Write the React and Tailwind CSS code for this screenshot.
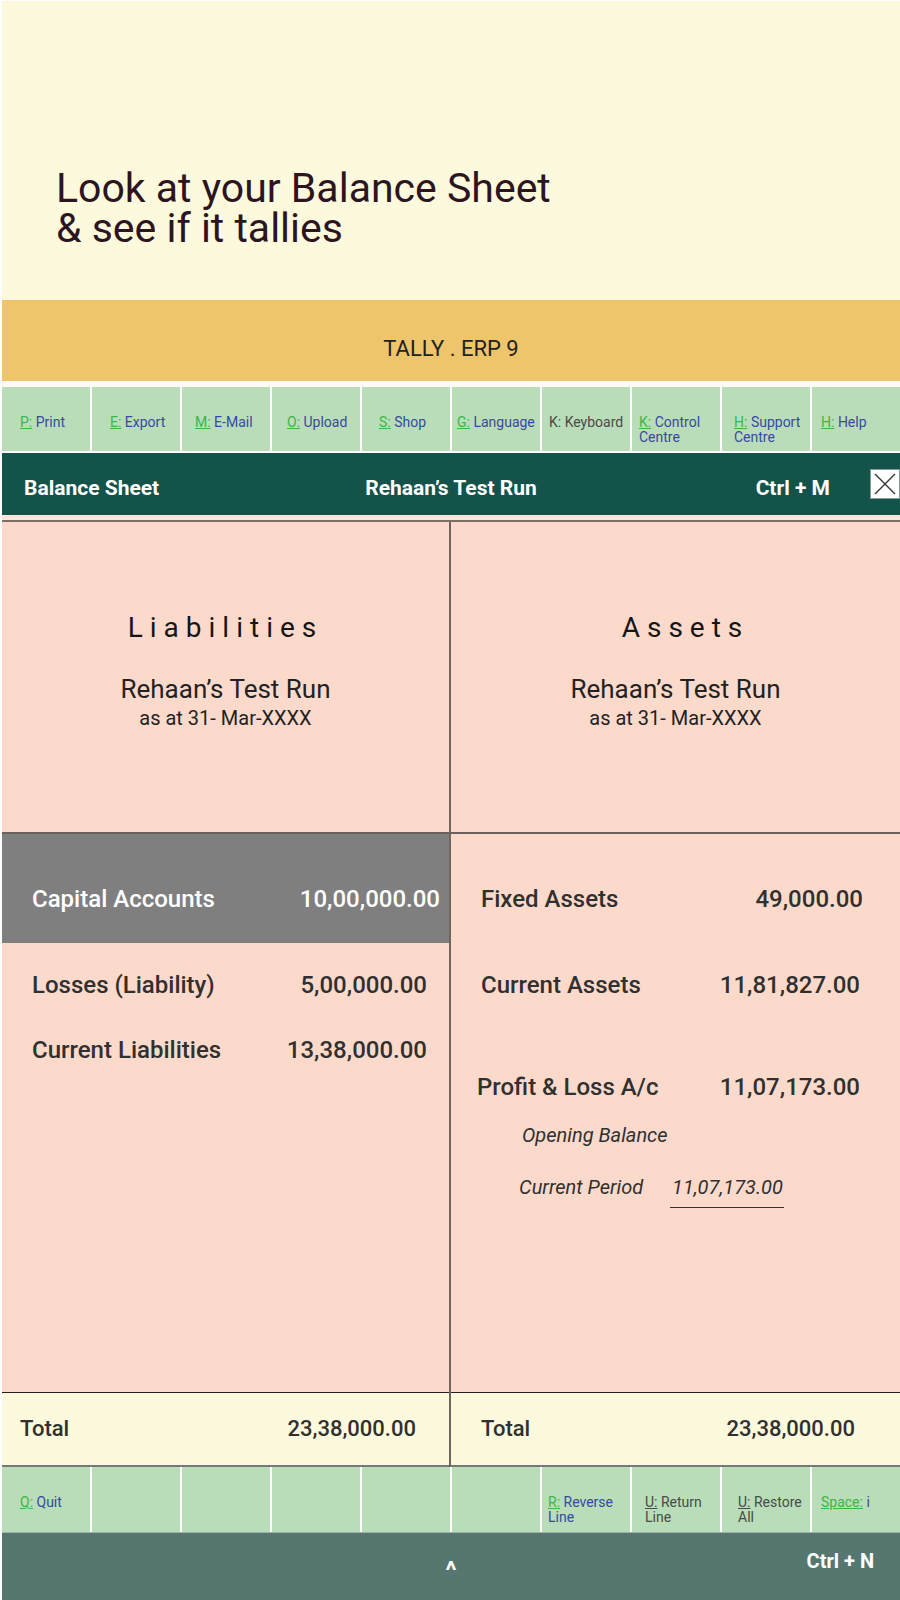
import React from "react";

const K = ({ children, gray }) => (
  <span className={gray ? "underline text-[#4a4a4a]" : "underline text-[#3cb54a]"}>{children}</span>
);

function Cell({ pl, children }) {
  return (
    <div className={`bg-[#b8ddb8] h-full pt-[28px] text-[14px] leading-[15px] ${pl}`}>
      {children}
    </div>
  );
}

const Blue = ({ children }) => <span className="text-[#3849a2]">{children}</span>;
const Gray = ({ children }) => <span className="text-[#4a4a4a]">{children}</span>;

export default function App() {
  return (
    <div className="w-[900px] h-[1600px] bg-white pt-[1px] pl-[2px] font-['Roboto','Noto_Sans',sans-serif] overflow-hidden">
      {/* Hero */}
      <div className="h-[299px] bg-[#fdf9dc] pt-[167px] pl-[54px] text-[41px] leading-[40px] text-[#2c1420]">
        Look at your Balance Sheet
        <br />
        &amp; see if it tallies
      </div>

      {/* Tally band */}
      <div className="h-[81px] bg-[#eec56b] pt-[38px] text-center text-[22px] leading-[22px] text-[#222]">
        TALLY . ERP 9
      </div>
      <div className="h-[6px] bg-[#fefcf2]" />

      {/* Top toolbar */}
      <div className="h-[64px] grid grid-cols-10 gap-[2px] bg-white">
        <Cell pl="pl-[18px]"><K>P:</K> <Blue>Print</Blue></Cell>
        <Cell pl="pl-[18px]"><K>E:</K> <Blue>Export</Blue></Cell>
        <Cell pl="pl-[13px]"><K>M:</K> <Blue>E-Mail</Blue></Cell>
        <Cell pl="pl-[15px]"><K>O:</K> <Blue>Upload</Blue></Cell>
        <Cell pl="pl-[17px]"><K>S:</K> <Blue>Shop</Blue></Cell>
        <Cell pl="pl-[5px]"><K>G:</K> <Blue>Language</Blue></Cell>
        <Cell pl="pl-[7px]"><Gray>K: Keyboard</Gray></Cell>
        <Cell pl="pl-[7px]"><K>K:</K> <Blue>Control<br />Centre</Blue></Cell>
        <Cell pl="pl-[12px]"><K>H:</K> <Blue>Support<br />Centre</Blue></Cell>
        <Cell pl="pl-[9px]"><K>H:</K> <Blue>Help</Blue></Cell>
      </div>
      <div className="h-[2px] bg-white" />

      {/* Header bar */}
      <div className="h-[62px] bg-[#13534a] grid grid-cols-[1fr_auto_1fr] items-center text-white text-[21px] leading-[21px] font-bold">
        <div className="pl-[22px] pt-[8px]">Balance Sheet</div>
        <div className="pt-[8px]">Rehaan’s Test Run</div>
        <div className="flex justify-end items-center">
          <span className="pt-[8px]">Ctrl + M</span>
          <div className="ml-[40px] w-[30px] h-[30px] bg-white border border-[#7d9c93] flex items-center justify-center">
            <svg width="24" height="24" viewBox="0 0 24 24">
              <path d="M2 2 L22 22 M22 2 L2 22" stroke="#333" strokeWidth="1.4" fill="none" />
            </svg>
          </div>
        </div>
      </div>
      <div className="h-[5px] bg-[#fde6da]" />

      {/* Table */}
      <div className="grid grid-cols-2 border-t-2 border-[#806d66] text-[#303030]">
        {/* Left column */}
        <div className="border-r-2 border-[#6f6460]">
          <div className="h-[312px] bg-[#fcdacb] border-b-2 border-[#6b605b] pt-[92px] text-center">
            <div className="text-[28px] leading-[28px] tracking-[7px] text-[#151515]">Liabilities</div>
            <div className="mt-[34px] text-[26px] leading-[26px] text-[#222]">Rehaan’s Test Run</div>
            <div className="mt-[6px] text-[20px] leading-[20px] text-[#222]">as at 31- Mar-XXXX</div>
          </div>
          <div className="h-[559px] bg-[#fcdacb] border-b border-[#222] text-[24px] leading-[24px] font-medium">
            <div className="h-[109px] bg-[#7f7f7f] text-white pt-[53px] pl-[30px] pr-[9px] flex justify-between items-start">
              <span>Capital Accounts</span>
              <span>10,00,000.00</span>
            </div>
            <div className="mt-[30px] pl-[30px] pr-[22px] flex justify-between">
              <span>Losses (Liability)</span>
              <span>5,00,000.00</span>
            </div>
            <div className="mt-[41px] pl-[30px] pr-[22px] flex justify-between">
              <span>Current Liabilities</span>
              <span>13,38,000.00</span>
            </div>
          </div>
          <div className="h-[74px] bg-[#fdf9dc] border-b-2 border-[#777] flex items-center justify-between pl-[18px] pr-[33px] text-[22px] leading-[22px] font-medium">
            <span>Total</span>
            <span>23,38,000.00</span>
          </div>
        </div>

        {/* Right column */}
        <div>
          <div className="h-[312px] bg-[#fcdacb] border-b-2 border-[#6b605b] pt-[92px] text-center">
            <div className="pl-[20px] text-[28px] leading-[28px] tracking-[7px] text-[#151515]">Assets</div>
            <div className="mt-[34px] text-[26px] leading-[26px] text-[#222]">Rehaan’s Test Run</div>
            <div className="mt-[6px] text-[20px] leading-[20px] text-[#222]">as at 31- Mar-XXXX</div>
          </div>
          <div className="h-[559px] bg-[#fcdacb] border-b border-[#222] pt-[53px] text-[24px] leading-[24px] font-medium">
            <div className="pl-[30px] pr-[37px] flex justify-between">
              <span>Fixed Assets</span>
              <span>49,000.00</span>
            </div>
            <div className="mt-[62px] pl-[30px] pr-[40px] flex justify-between">
              <span>Current Assets</span>
              <span>11,81,827.00</span>
            </div>
            <div className="mt-[78px] pl-[26px] pr-[40px] flex justify-between">
              <span>Profit &amp; Loss A/c</span>
              <span>11,07,173.00</span>
            </div>
            <div className="mt-[26px] pl-[71px] text-[20px] leading-[20px] italic font-normal">Opening Balance</div>
            <div className="mt-[32px] pl-[68px] flex text-[20px] leading-[20px] italic font-normal">
              <span className="w-[151px]">Current Period</span>
              <span className="w-[114px] pl-[2px] pb-[10px] border-b border-[#333]">11,07,173.00</span>
            </div>
          </div>
          <div className="h-[74px] bg-[#fdf9dc] border-b-2 border-[#777] flex items-center justify-between pl-[30px] pr-[45px] text-[22px] leading-[22px] font-medium">
            <span>Total</span>
            <span>23,38,000.00</span>
          </div>
        </div>
      </div>

      {/* Bottom toolbar */}
      <div className="h-[65px] grid grid-cols-10 gap-[2px] bg-white">
        <Cell pl="pl-[18px]"><K>Q:</K> <Blue>Quit</Blue></Cell>
        <Cell pl="pl-[10px]"></Cell>
        <Cell pl="pl-[10px]"></Cell>
        <Cell pl="pl-[10px]"></Cell>
        <Cell pl="pl-[10px]"></Cell>
        <Cell pl="pl-[10px]"></Cell>
        <Cell pl="pl-[6px]"><K>R:</K> <Blue>Reverse<br />Line</Blue></Cell>
        <Cell pl="pl-[13px]"><K gray>U:</K> <Gray>Return<br />Line</Gray></Cell>
        <Cell pl="pl-[16px]"><K gray>U:</K> <Gray>Restore<br />All</Gray></Cell>
        <Cell pl="pl-[9px]"><K>Space:</K> <Blue>i</Blue></Cell>
      </div>

      {/* Bottom bar */}
      <div className="h-[68px] bg-[#557770] border-t border-[#9fb0ab] grid grid-cols-[1fr_auto_1fr] items-start pt-[18px] text-white text-[20px] leading-[20px] font-bold">
        <div />
        <div className="text-[26px] leading-[20px] translate-y-[9px]">^</div>
        <div className="flex justify-end pr-[26px]">Ctrl + N</div>
      </div>
    </div>
  );
}
